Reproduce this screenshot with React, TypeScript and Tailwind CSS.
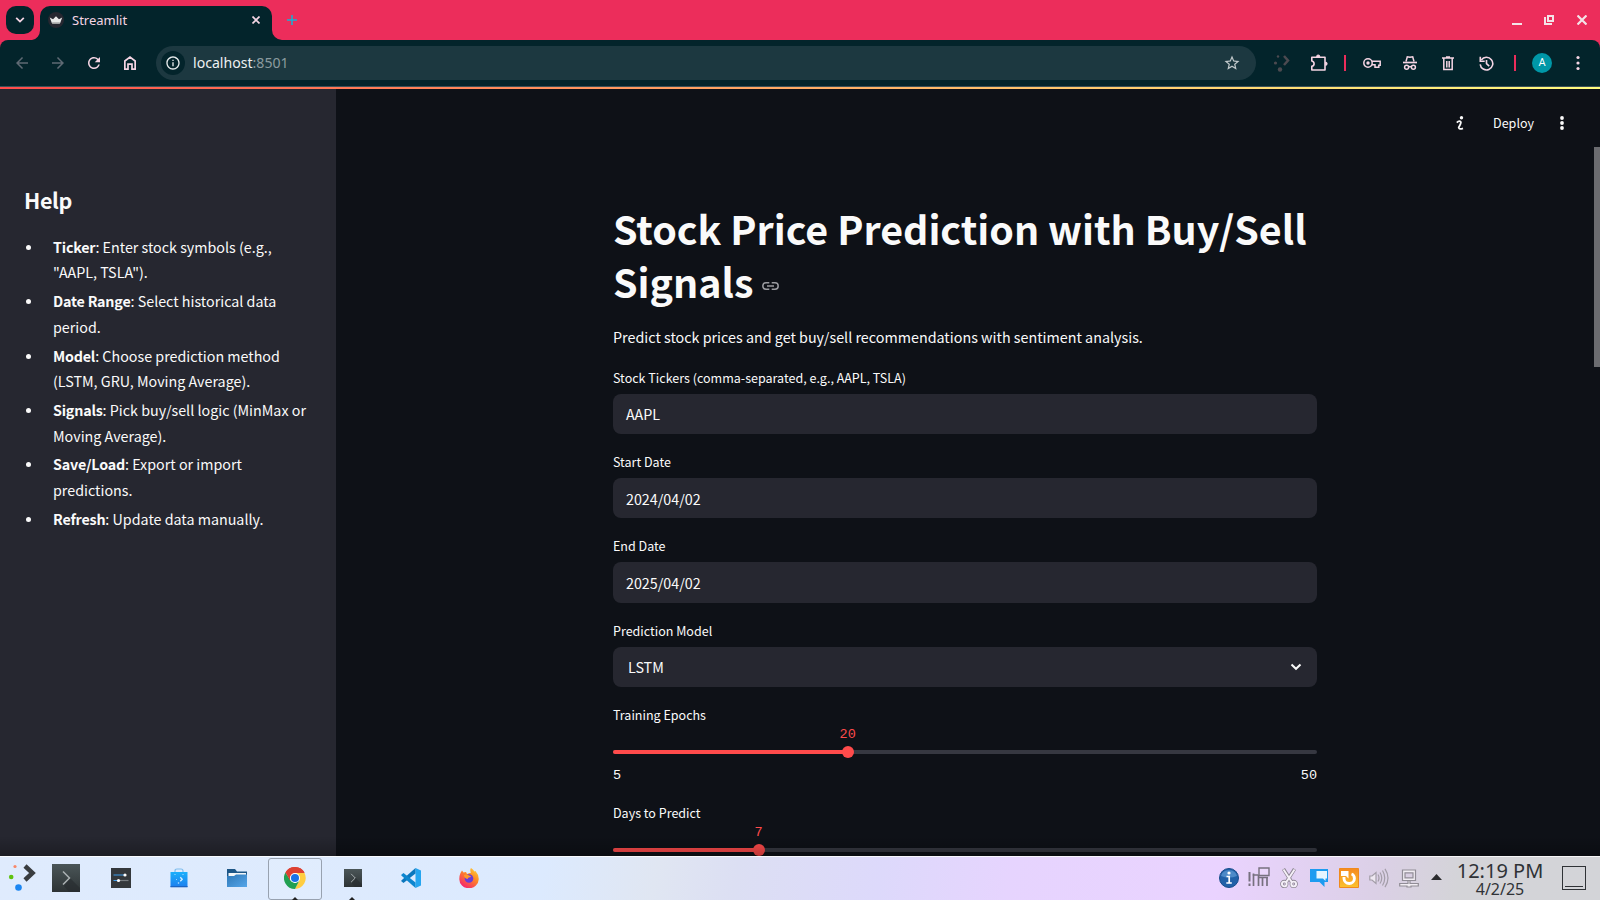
import React from "react";
import { MdArrowBack, MdArrowForward, MdRefresh, MdStarBorder, MdInfoOutline } from "react-icons/md";

const SANS = "font-['Noto_Sans_CJK_SC',sans-serif]";
const MONO = "font-['Liberation_Mono',monospace]";

function Slot({ w, children }: { w: string; children?: React.ReactNode }) {
  return <div className={`flex shrink-0 items-center justify-center ${w}`}>{children}</div>;
}

function TabStrip() {
  return (
    <div className="flex h-10 shrink-0 bg-[#ec2d5b] pl-1.5">
      <div className="mt-1.5 flex h-7 w-7 items-center justify-center rounded-[10px] bg-[#03242b]">
        <svg width="10" height="6" viewBox="0 0 10 6" fill="none" stroke="#f5d5e4" strokeWidth="1.8">
          <path d="M1.2 .9 5 4.6 8.8.9" />
        </svg>
      </div>
      <div className="flex w-1.5 items-end justify-end">
        <svg className="-ml-2 shrink-0" width="8" height="10" viewBox="0 0 8 10">
          <path d="M8 0A9 10 0 0 1 0 10H8Z" fill="#03242b" />
        </svg>
      </div>
      <div className="mt-1.5 flex h-[34px] w-[232px] items-start rounded-t-[10px] bg-[#03242b] pl-2 pt-1.5">
        <svg width="16" height="16" viewBox="0 0 16 16">
          <circle cx="8" cy="8" r="8" fill="#262730" />
          <path d="M1.8 5.6 5 7.3 8 4.2l3 3.1 3.2-1.7-2 5.4q-.3.6-1 .6H4.800q-.7 0-1-.6Z" fill="#e8e8e8" />
          <path d="M4 10.200h8l-.5 1.600h-7Z" fill="#aaa" />
        </svg>
        <span className="ml-2 w-[178px] font-['Noto_Sans',sans-serif] text-[13px] leading-4 text-[#f5d5e4]">Streamlit</span>
        <svg className="mt-1 ml-0.5" width="8" height="8" viewBox="0 0 8 8" stroke="#f5d5e4" strokeWidth="1.7">
          <path d="M.5.5l7 7M7.500.5l-7 7" />
        </svg>
      </div>
      <div className="flex w-[10px] items-end">
        <svg width="10" height="10" viewBox="0 0 10 10">
          <path d="M0 0A10 10 0 0 0 10 10H0Z" fill="#03242b" />
        </svg>
      </div>
      <svg className="ml-[5px] mt-[15px]" width="10" height="10" viewBox="0 0 10 10" stroke="#12b3d8" strokeWidth="1.500">
        <path d="M0 5h10M5 0v10" />
      </svg>
      <div className="mr-[13px] ml-auto flex items-center">
        <svg width="10" height="10" viewBox="0 0 10 10">
          <path d="M0 8h10v2H0Z" fill="#f3e3e8" />
        </svg>
        <svg className="ml-[22px]" width="10" height="10" viewBox="0 0 10 10" fill="none" stroke="#f3e3e8" strokeWidth="2">
          <path d="M4 1h5v5H4ZM1 2v7h7" />
        </svg>
        <svg className="ml-[23px]" width="10" height="10" viewBox="0 0 10 10" stroke="#f3e3e8" strokeWidth="2.200">
          <path d="M.5.5l9 9M9.500.5l-9 9" />
        </svg>
      </div>
    </div>
  );
}

function Toolbar() {
  return (
    <div className="shrink-0 bg-[#ec2d5b]">
      <div className="flex h-[46px] items-center rounded-t-lg bg-[#03242b] pl-1">
        <Slot w="w-9"><MdArrowBack size={18} color="#5f6a74" /></Slot>
        <Slot w="w-9"><MdArrowForward size={18} color="#5f6a74" /></Slot>
        <Slot w="w-9"><MdRefresh size={18} color="#f5d5e4" /></Slot>
        <Slot w="w-9">
          <svg width="14" height="16" viewBox="0 0 14 16" fill="none" stroke="#f5d5e4" strokeWidth="1.700">
            <path d="M1.850 6 7 2l5.150 4v8.150H9V9.200H5v4.950H1.850Z" />
          </svg>
        </Slot>
        <div className="ml-2 flex h-[34px] w-[1100px] items-center rounded-full bg-[#1c3840] pl-[5px]">
          <div className="flex h-6 w-6 items-center justify-center rounded-full bg-[#03242b]">
            <MdInfoOutline size={16} color="#e8eced" />
          </div>
          <span className="ml-2 font-['Noto_Sans',sans-serif] text-[14.100px] leading-5 text-[#eef1f2]">
            localhost<span className="text-[#8b9b9f]">:8501</span>
          </span>
          <div className="mr-[15px] ml-auto"><MdStarBorder size={18} color="#c3cacc" /></div>
        </div>
        <div className="w-2" />
        <Slot w="w-9">
          <svg width="18" height="18" viewBox="0 0 18 18">
            <g fill="#4c4a50">
              <circle cx="5" cy="2.500" r="1.200" /><circle cx="2.500" cy="9" r="1.600" /><circle cx="7" cy="15.500" r="2.200" />
            </g>
            <path d="m11 2 4 4.500-4 4.500" fill="none" stroke="#4c4a50" strokeWidth="2.500" />
          </svg>
        </Slot>
        <Slot w="w-9">
          <svg className="-mr-[2px] mb-px" width="18" height="18" viewBox="0 0 18 18" fill="none" stroke="#f5d5e4" strokeWidth="1.600">
            <path d="M1.800 3.300H15V16H1.800v-3.700q2.300-.5 2.300-2.650T1.800 7Z" strokeLinejoin="round" />
            <path d="M6.500 2.500a1.700 1.500 0 0 1 3.400 0ZM15.700 8v3.400q1.400-.2 1.400-1.700T15.700 8Z" fill="#f5d5e4" strokeWidth="1" />
          </svg>
        </Slot>
        <Slot w="w-[18px]"><div className="h-4 w-0.5 bg-[#ec2d5b]" /></Slot>
        <Slot w="w-9">
          <svg width="18" height="12" viewBox="0 0 18 12" fill="none" stroke="#f5d5e4" strokeWidth="1.500">
            <circle cx="5" cy="6" r="4.200" />
            <circle cx="5" cy="6" r="1.700" fill="#f5d5e4" stroke="none" />
            <path d="M9 4.300h8.200v3.900h-1.400v2.100H12V7.700H9" />
          </svg>
        </Slot>
        <div className="w-0.5" />
        <Slot w="w-9">
          <svg width="16" height="16" viewBox="0 0 16 16" fill="none" stroke="#f5d5e4" strokeWidth="1.500">
            <path d="M4 6.500 5.300 1.800l2.700.5 2.700-.5L12 6.500" />
            <path d="M1 7.500h14" strokeWidth="1.700" />
            <circle cx="4.600" cy="12.300" r="2" /><circle cx="11.400" cy="12.300" r="2" />
            <path d="M6.500 12q1.500-.8 3 0" />
          </svg>
        </Slot>
        <div className="w-0.5" />
        <Slot w="w-9">
          <svg width="12" height="15" viewBox="0 0 12 15" fill="none" stroke="#f5d5e4" strokeWidth="1.500">
            <path d="M0 2h12M4 1h4M1.800 2.500v11h8.400v-11M4.800 5v6.500M7.200 5v6.500" />
          </svg>
        </Slot>
        <div className="w-0.5" />
        <Slot w="w-9">
          <svg width="15" height="15" viewBox="0 0 15 15" fill="none" stroke="#f5d5e4" strokeWidth="1.600">
            <path d="M1.200 8.300A6.300 6.300 0 1 0 2.300 4" />
            <path d="M1.300.8v4.400h4.400" />
            <path d="M7.500 4v3.700l2.700 2.500" />
          </svg>
        </Slot>
        <div className="w-0.5" />
        <Slot w="w-[18px]"><div className="h-4 w-0.5 bg-[#ec2d5b]" /></Slot>
        <Slot w="w-9">
          <div className="flex h-5 w-5 items-center justify-center rounded-full bg-[#0097a7] font-['Roboto',sans-serif] text-[11px] text-white">A</div>
        </Slot>
        <Slot w="w-9">
          <svg width="4" height="16" viewBox="0 0 4 16" fill="#f5d5e4">
            <circle cx="2" cy="2.500" r="1.600" /><circle cx="2" cy="8" r="1.600" /><circle cx="2" cy="13.500" r="1.600" />
          </svg>
        </Slot>
      </div>
    </div>
  );
}

const HELP = [
  ["Ticker", <>: Enter stock symbols (e.g.,<br />"AAPL, TSLA").</>],
  ["Date Range", <>: Select historical data<br />period.</>],
  ["Model", <>: Choose prediction method<br />(LSTM, GRU, Moving Average).</>],
  ["Signals", <>: Pick buy/sell logic (MinMax or<br />Moving Average).</>],
  ["Save/Load", <>: Export or import<br />predictions.</>],
  ["Refresh", <>: Update data manually.</>],
] as const;

function Sidebar() {
  return (
    <aside className="w-[336px] shrink-0 bg-[#262730] pt-[98px] pl-6 text-[#fafafa]">
      <h2 className="text-[21.500px] leading-[29px] font-bold tracking-[-0.35px]">Help</h2>
      <ul className="mt-[19.900px] text-[14.300px] leading-[25.600px]">
        {HELP.map(([name, text]) => (
          <li key={name} className="mb-[3.200px] flex whitespace-nowrap">
            <div className="mt-[11px] mr-[22px] ml-[2px] h-[5px] w-[5px] shrink-0 rounded-full bg-[#fafafa]" />
            <div><b className="tracking-[-0.2px]">{name}</b>{text}</div>
          </li>
        ))}
      </ul>
    </aside>
  );
}

function Field({ label, value, select }: { label: string; value: string; select?: boolean }) {
  return (
    <div className="mb-4">
      <div className="h-7 text-[12.530px] leading-[24px]">{label}</div>
      <div className={`flex h-[40.400px] items-center justify-between rounded-lg bg-[#262730] pr-[15px] text-[14.300px] ${select ? "pl-[15px]" : "pl-[13px]"}`}>
        <span>{value}</span>
        {select && (
          <svg width="12" height="8" viewBox="0 0 12 8" fill="none" stroke="#fafafa" strokeWidth="2">
            <path d="M1.500 1.500 6 5.800l4.500-4.300" />
          </svg>
        )}
      </div>
    </div>
  );
}

function Slider({ label, value, min, max, ends }: { label: string; value: number; min: number; max: number; ends?: boolean }) {
  const pct = `${((value - min) / (max - min)) * 100}%`;
  return (
    <div className="h-[98px]">
      <div className="h-[24px] text-[12.530px] leading-[24px]">{label}</div>
      <div className="relative mt-[22.800px] h-1 rounded-full bg-[#363841]">
        <div className="h-1 rounded-l-full bg-[#ff4b4b]" style={{ width: pct }} />
        <div className="absolute -top-1 -ml-1.5 h-3 w-3 rounded-full bg-[#ff4b4b]" style={{ left: pct }} />
        <div className={`absolute -top-[23px] -translate-x-1/2 text-[13.500px] leading-4 text-[#ff4b4b] ${MONO}`} style={{ left: pct }}>{value}</div>
      </div>
      {ends && (
        <div className={`mt-[14px] flex justify-between text-[13.500px] leading-4 ${MONO}`}>
          <span>{min}</span>
          <span>{max}</span>
        </div>
      )}
    </div>
  );
}

function Main() {
  return (
    <main className="relative flex-1 overflow-hidden bg-[#0e1117] text-[#fafafa]">
      <div className="flex h-[60px] items-end justify-end pr-[36px]">
        <svg className="mb-[17px]" width="8" height="14" viewBox="0 0 8 14" fill="none" stroke="#fafafa" strokeWidth="1.800">
          <circle cx="5.500" cy="1.800" r="1.700" fill="#fafafa" stroke="none" />
          <path d="M.8 6.600Q2.500 4.800 4.200 5.300q1.200.5.3 2.600T2.700 11.500q.3 2.300 4.300.8" />
        </svg>
        <span className="mb-[14px] ml-[29px] text-[12.530px] leading-5">Deploy</span>
        <svg className="mb-[17px] ml-[26px]" width="4" height="14" viewBox="0 0 4 14" fill="#fafafa">
          <circle cx="2" cy="2" r="1.900" /><circle cx="2" cy="7" r="1.900" /><circle cx="2" cy="12" r="1.900" />
        </svg>
      </div>
      <div className="ml-[277px] w-[704px] pt-[55px]">
        <h1 className="text-[39.400px] leading-[52.800px] font-bold whitespace-nowrap">
          Stock Price Prediction with Buy/Sell
          <br />
          <span className="flex items-center">
            Signals
            <svg className="mt-[9px] ml-2" width="17" height="8" viewBox="0 0 17 8" fill="none" stroke="#9a9ba0" strokeWidth="1.500">
              <path d="M7.300.8H4a3.200 3.200 0 0 0 0 6.400h3.300M9.700.8H13a3.200 3.200 0 0 1 0 6.400H9.700M5 4h7" />
            </svg>
          </span>
        </h1>
        <p className="mt-[16.600px] mb-[15.900px] h-[25.600px] text-[14.330px] leading-[25.600px]">
          Predict stock prices and get buy/sell recommendations with sentiment analysis.
        </p>
        <Field label="Stock Tickers (comma-separated, e.g., AAPL, TSLA)" value="AAPL" />
        <Field label="Start Date" value="2024/04/02" />
        <Field label="End Date" value="2025/04/02" />
        <Field label="Prediction Model" value="LSTM" select />
        <Slider label="Training Epochs" value={20} min={5} max={50} ends />
        <Slider label="Days to Predict" value={7} min={1} max={30} />
      </div>
      <div className="absolute top-[60px] right-0 h-[220px] w-1.5 bg-[#6b6c70]" />
    </main>
  );
}

function Konsole({ size }: { size: number }) {
  return (
    <svg width={size} height={size} viewBox="0 0 28 28">
      <defs><linearGradient id="kon" x2="0" y2="1"><stop stopColor="#4b5658" /><stop offset="1" stopColor="#2d3335" /></linearGradient></defs>
      <path d="M0 0h28v28H0Z" fill="url(#kon)" />
      <path d="m18 14 10 10v4H17l-5-6Z" fill="#272c2e" opacity=".6" />
      <path d="m11 7.500 6.500 6.500-6.500 6.500" fill="none" stroke="#aab0b2" strokeWidth="1.500" />
    </svg>
  );
}

function Chrome() {
  return (
    <svg className="mb-px" width="22" height="22" viewBox="0 0 48 48">
      <path d="M24 24 3.200 12A24 24 0 0 1 44.800 12Z" fill="#db4437" />
      <path d="M24 13h20.800a24 24 0 0 1-20.800 35l9.500-18.500Z" fill="#ffcd40" />
      <path d="M3.200 12 14.500 29.500 24 35l9.500-5.500L24 48A24 24 0 0 1 3.200 12Z" fill="#21a052" />
      <path d="M3.200 12A24 24 0 0 1 44.800 12.500H24L14.500 18.500 13 29Z" fill="#dd4132" />
      <circle cx="24" cy="24" r="11" fill="#fff" />
      <circle cx="24" cy="24" r="8.800" fill="#1a73e8" />
    </svg>
  );
}

function Taskbar() {
  return (
    <div className="flex h-11 shrink-0 items-center border-t border-white/80 bg-[linear-gradient(100deg,#dfebfd_0%,#dceafe_34%,#e0e6f2_41%,#dcdff3_46%,#ddd9fb_55%,#e6d4fe_63%,#ead3ff_76%,#dbd0e6_86%,#d4d4d8_91%,#d3d4d8_100%)]">
      <div className="w-2" />
      <Slot w="w-7">
        <svg className="mb-px" width="28" height="28" viewBox="0 0 28 28">
          <circle cx="7" cy="2.500" r="1.600" fill="#f98868" /><circle cx="3.200" cy="13" r="2.300" fill="#5fc20e" /><circle cx="10.500" cy="23.500" r="3.300" fill="#1c86f2" />
          <path d="m17 2 7.500 7-7.500 7" fill="none" stroke="#3a3d40" strokeWidth="4.500" />
        </svg>
      </Slot>
      <div className="w-4" />
      <div className="mb-px"><Konsole size={28} /></div>
      <div className="w-[31px]" />
      <svg className="mb-px" width="20" height="20" viewBox="0 0 20 20">
        <path d="M0 0h20v20H0Z" fill="#34383c" />
        <path d="M2.500 7H15M2.500 12.500H7" stroke="#3d9be9" strokeWidth="1.200" />
        <path d="M7 12.500h10.500" stroke="#777c80" strokeWidth="1.200" />
        <circle cx="14" cy="7" r="1.600" fill="#fff" /><circle cx="7.500" cy="12.500" r="1.600" fill="#fff" />
      </svg>
      <div className="w-[39px]" />
      <svg className="mb-px" width="18" height="20" viewBox="0 0 18 20">
        <defs><linearGradient id="dis" x2="0" y2="1"><stop stopColor="#1bb0fb" /><stop offset="1" stopColor="#1d7fee" /></linearGradient></defs>
        <path d="M5 6V3q0-2 2-2h4q2 0 2 2v3" fill="none" stroke="#7fbdee" strokeWidth="1.200" />
        <path d="M.5 4h17v15H.5Z" fill="url(#dis)" />
        <path d="M.5 18h17v1.300H.5Z" fill="#1b64c2" />
        <g fill="#bfe4ff"><circle cx="5" cy="6.500" r=".6" /><circle cx="13" cy="6.500" r=".6" /><circle cx="6.500" cy="11.500" r=".5" /><circle cx="8.500" cy="15" r=".8" /></g>
        <path d="m10.300 9.300 1.900 2-1.900 2" fill="none" stroke="#d6efff" strokeWidth="1.300" />
      </svg>
      <div className="w-[39px]" />
      <svg className="mb-px" width="20" height="18" viewBox="0 0 20 18">
        <defs><linearGradient id="fol" x2="1" y2="1"><stop stopColor="#2f78b7" /><stop offset="1" stopColor="#56a6ea" /></linearGradient></defs>
        <path d="M0 0h8l2 2.500h10V9H0Z" fill="#1d5686" />
        <path d="M1.500 4H19v5H1.500Z" fill="#f5f7f8" />
        <path d="M0 7h7l2-1.500h11V18H0Z" fill="url(#fol)" />
      </svg>
      <div className="w-[21px]" />
      <div className="relative flex h-[42px] w-[54px] items-center justify-center rounded-[3px] border border-[#98a2b0] bg-white/10">
        <Chrome />
        <svg className="absolute -bottom-px left-[23px]" width="6" height="3" viewBox="0 0 6 3"><path d="M3 0l3 3H0Z" fill="#222" /></svg>
      </div>
      <div className="relative flex h-[42px] w-[62px] items-center justify-center">
        <div className="mb-px"><Konsole size={18} /></div>
        <svg className="absolute bottom-0 left-[27px]" width="6" height="3" viewBox="0 0 6 3"><path d="M3 0l3 3H0Z" fill="#222" /></svg>
      </div>
      <div className="w-[17px]" />
      <svg className="mb-px" width="20" height="20" viewBox="0 0 20 20">
        <path d="M14.500 0 20 2.500v15L14.500 20Z" fill="#25a5ef" />
        <path d="M14.500 0v5.500L2.500 15 .3 13.200V12.500Z" fill="#0b77bd" />
        <path d="M14.500 20v-5.500L2.500 5 .3 6.800V7.500Z" fill="#0d86cf" />
      </svg>
      <div className="w-[38px]" />
      <svg className="mb-px" width="20" height="20" viewBox="0 0 20 20">
        <defs><linearGradient id="fx" x1="1" y1="0" x2=".3" y2="1"><stop stopColor="#ffe23e" /><stop offset=".45" stopColor="#ff8a23" /><stop offset="1" stopColor="#f5246d" /></linearGradient></defs>
        <path d="M1.500 5 3 2.500 4.500 4.500 7 4 8 6l4-1.500Q10.500 2 12 0q2 1 3.500 3.500L16.500 3Q20 7 19.700 11.500A9.700 9 0 0 1 .3 11Q.3 7.500 1.500 5Z" fill="url(#fx)" />
        <circle cx="10" cy="10.500" r="4.300" fill="#6b3bd6" />
        <path d="M5 7q3-1 5 .5 2 .3 2 1.500-3 0-3.500 2Q5 10 5 7Z" fill="#ff9a2a" />
      </svg>

      <div className="mr-[14px] ml-auto flex items-center pb-px">
        <Slot w="w-[30px]">
          <svg width="20" height="20" viewBox="0 0 20 20">
            <circle cx="10" cy="10" r="9.500" fill="#2060a8" stroke="#174d8b" />
            <path d="M2 8a8.200 7.500 0 0 1 16 0q-8 3-16 0Z" fill="#5f9bd5" opacity=".7" />
            <circle cx="10" cy="5" r="1.600" fill="#fff" />
            <path d="M7.500 8.500h2.700v6M7.300 15h5.500" fill="none" stroke="#fff" strokeWidth="1.700" />
          </svg>
        </Slot>
        <Slot w="w-[30px]">
          <svg className="mb-0.5" width="22" height="20" viewBox="0 0 22 20" fill="none" stroke="#77717f" strokeWidth="1.700">
            <path d="M1.500 5v9.500M1.500 16.500v2.500" strokeWidth="2" />
            <path d="M5.500 19V6.500M4.500 8h6M10.500 19V8M14.500 19v-8.500M19 19v-8.500M10 10.500h10" />
            <path d="M11 1h10v7.500H11Z" fill="#ead7fb" strokeWidth="1.400" />
          </svg>
        </Slot>
        <Slot w="w-[30px]">
          <svg width="18" height="20" viewBox="0 0 18 20" fill="none">
            <g stroke="#8d8693" strokeWidth="3.500"><path d="M3.500 1 12 14.500M14.500 1 6 14.500" /><circle cx="4.300" cy="16" r="2.400" /><circle cx="13.700" cy="16" r="2.400" /></g>
            <g stroke="#f5f0f8" strokeWidth="1.900"><path d="M3.500 1.500 12 14.500M14.500 1.500 6 14.500" /><circle cx="4.300" cy="16" r="2.400" /><circle cx="13.700" cy="16" r="2.400" /></g>
          </svg>
        </Slot>
        <Slot w="w-[30px]">
          <svg width="18" height="18" viewBox="0 0 18 18">
            <path d="M0 0h18v13h-3.500v5L9.500 13H0Z" fill="#1d9bf0" />
            <path d="M6.500 2H17v7.500h-1.500V12L13 9.500H6.500Z" fill="#e6f5ff" />
          </svg>
        </Slot>
        <Slot w="w-[30px]">
          <svg width="20" height="20" viewBox="0 0 20 20">
            <defs><linearGradient id="up" x2="0" y2="1"><stop stopColor="#f58a1f" /><stop offset="1" stopColor="#fbc22d" /></linearGradient></defs>
            <path d="M.5.5h19v19H.5Z" fill="url(#up)" stroke="#f08a1c" />
            <path d="M5 9v1.500a5.200 5 0 0 0 10.400 0Q15.400 7 12.500 6" fill="none" stroke="#fff" strokeWidth="2.900" />
            <path d="M2 3H9.500v7.500L7 8H2Z" fill="#fff" />
          </svg>
        </Slot>
        <Slot w="w-[30px]">
          <svg width="20" height="20" viewBox="0 0 20 20" fill="none" stroke="#a39da8" strokeWidth="1.200">
            <path d="M.8 8H3l4-3.500v11L3 12H.8Z" fill="#eee8f2" />
            <path d="M9 6.500q2 3.500 0 7M11 4.500q3.500 5.500 0 11M13.500 2.500q4.500 7.500 0 15M16 .8q6 9.200 0 18.400" />
          </svg>
        </Slot>
        <Slot w="w-[30px]">
          <svg width="20" height="19" viewBox="0 0 20 19" fill="#f1edf3" stroke="#918d96" strokeWidth="1.200">
            <path d="M3.500 1h13v10.500h-13Z" /><path d="M6 3.800h8v5H6Z" fill="#d9cfe2" />
            <path d="M9 11.500h2v3h8.300v2.500H12v1H8v-1H.7v-2.500H9Z" />
          </svg>
        </Slot>
        <Slot w="w-6">
          <svg className="mb-0.5" width="11" height="6" viewBox="0 0 11 6"><path d="M5.500 0 11 6H0Z" fill="#2b2b2e" /></svg>
        </Slot>
        <div className="flex w-[104px] flex-col items-center font-['Noto_Sans',sans-serif] text-[#2f3236]">
          <span className="mt-0.5 text-[20px] leading-[20px]">12:19 PM</span>
          <span className="text-[16px] leading-[17px]">4/2/25</span>
        </div>
        <div className="ml-2.5 flex h-6 w-6 items-end border border-[#2f3236] p-[2px]"><div className="h-px w-full bg-[#2f3236]" /></div>
      </div>
    </div>
  );
}

export default function App() {
  return (
    <div className="flex h-[900px] w-[1600px] flex-col overflow-hidden bg-[#0e1117]">
      <TabStrip />
      <Toolbar />
      <div className="h-px shrink-0 bg-[#3a5058]" />
      <div className={`relative flex min-h-0 flex-1 overflow-hidden ${SANS}`}>
        <Sidebar />
        <Main />
        <div className="absolute inset-x-0 top-0 h-0.5 bg-linear-to-r from-[#ff4b4b] to-[#fffd80]" />
        <div className="absolute inset-x-0 bottom-0 h-5 bg-linear-to-b from-transparent to-black/25" />
      </div>
      <Taskbar />
    </div>
  );
}
